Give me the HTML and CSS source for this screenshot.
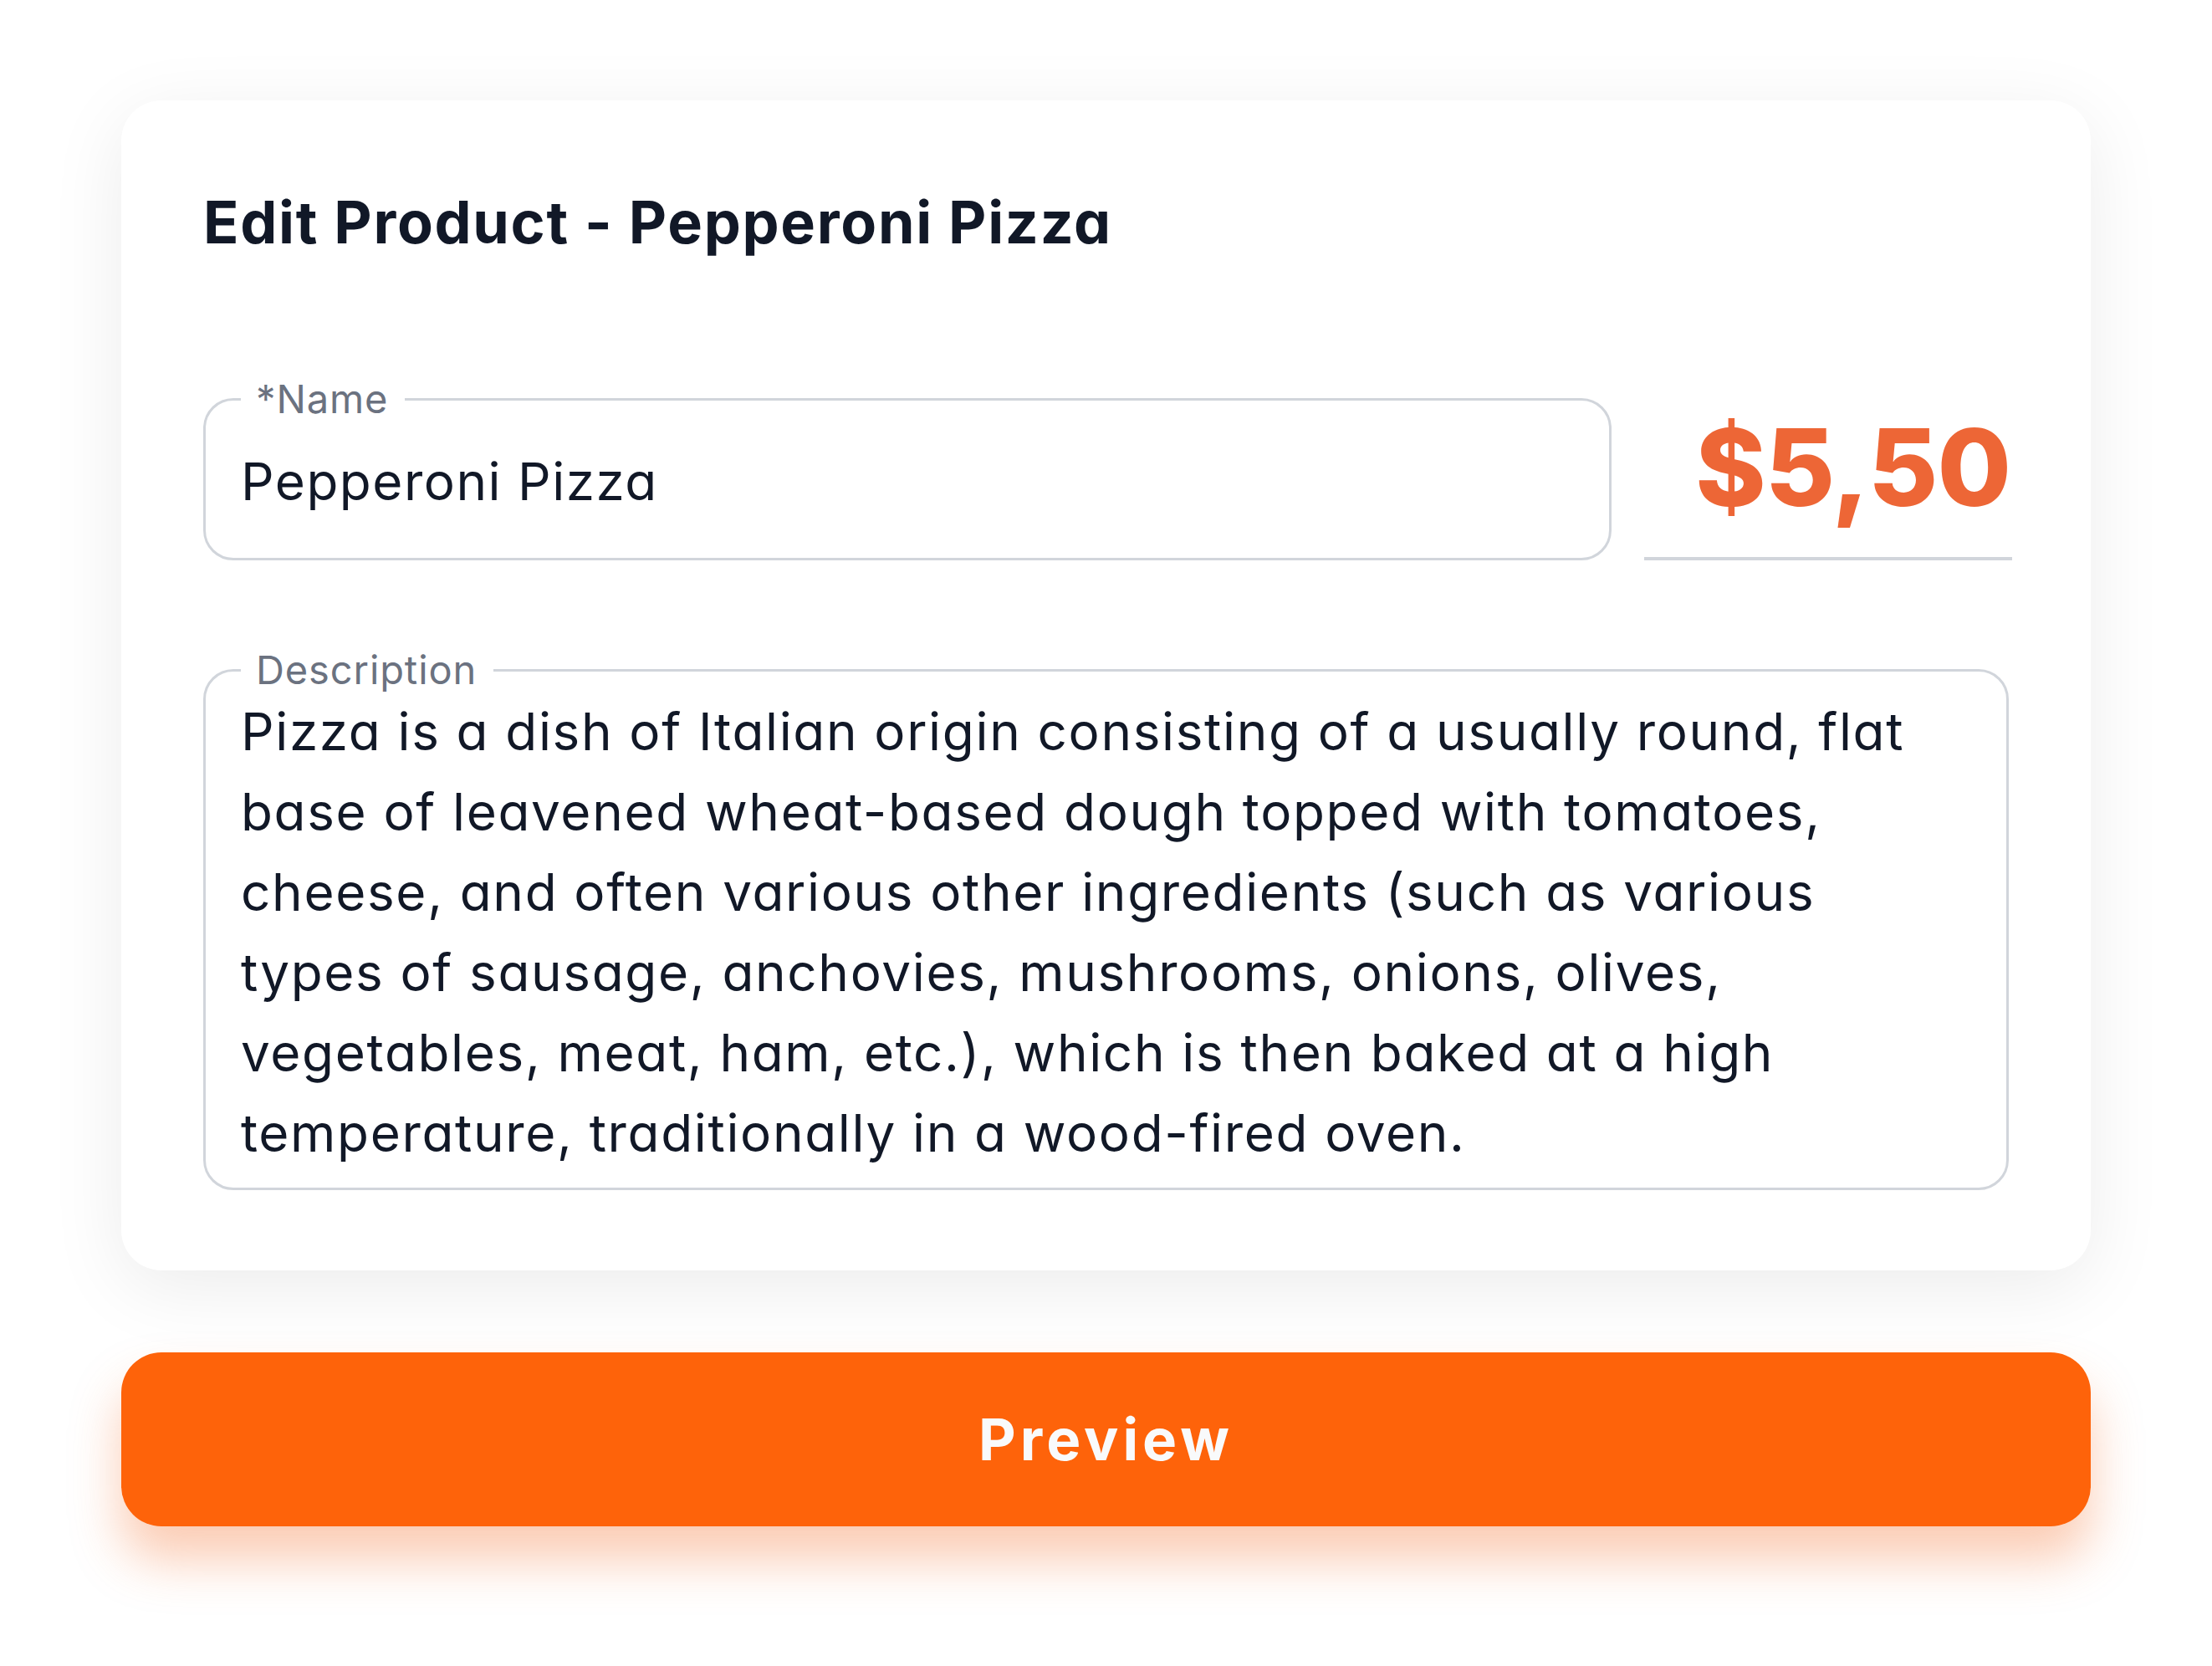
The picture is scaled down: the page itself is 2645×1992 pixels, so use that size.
FILE: index.html
```html
<!DOCTYPE html>
<html lang="en">
<head>
<meta charset="utf-8">
<title>Edit Product - Pepperoni Pizza</title>
<link rel="stylesheet" href="styles.css">
</head>
<body>
<main class="page">
  <section class="card">
    <h1 class="title">Edit Product - Pepperoni Pizza</h1>
    <div class="row">
      <fieldset class="field field-name">
        <legend class="field-label">*Name</legend>
        <div class="field-value">Pepperoni Pizza</div>
      </fieldset>
      <div class="price">$5,50</div>
    </div>
    <fieldset class="field field-desc">
      <legend class="field-label">Description</legend>
      <div class="desc-text">
        <span class="line">Pizza is a dish of Italian origin consisting of a usually round, flat</span>
        <span class="line">base of leavened wheat-based dough topped with tomatoes,</span>
        <span class="line">cheese, and often various other ingredients (such as various</span>
        <span class="line">types of sausage, anchovies, mushrooms, onions, olives,</span>
        <span class="line">vegetables, meat, ham, etc.), which is then baked at a high</span>
        <span class="line">temperature, traditionally in a wood-fired oven.</span>
      </div>
    </fieldset>
  </section>
  <button class="preview-btn" type="button">Preview</button>
</main>
</body>
</html>
```

FILE: styles.css
```css
* { box-sizing: border-box; }

html, body {
  margin: 0;
  padding: 0;
  background: #ffffff;
}

body {
  min-height: 100vh;
  font-family: Inter, "Noto Sans", "Liberation Sans", sans-serif;
  color: #111827;
  font-feature-settings: "cv11" 1;
}

.page {
  width: 2355px;
  margin: 0 auto;
  padding: 120px 0 168px 0;
  display: flex;
  flex-direction: column;
  gap: 98px;
}

.card {
  background: #ffffff;
  border-radius: 48px;
  box-shadow: 0 20px 90px rgba(0, 0, 0, 0.08);
  padding: 104px 98px 96px 98px;
  display: flex;
  flex-direction: column;
}

.title {
  margin: 0 0 143px 0;
  font-size: 70px;
  line-height: 84px;
  font-weight: 700;
  color: #111827;
  letter-spacing: 1.7px;
}

.row {
  display: flex;
  align-items: flex-end;
  gap: 39px;
  margin-bottom: 105px;
}

.field {
  margin: 0;
  border: 3px solid #d1d5db;
  border-radius: 36px;
  min-width: 0;
}

.field-label {
  margin-left: 0;
  padding: 0 20px 0 18px;
  font-size: 47px;
  line-height: 52px;
  color: #6b7280;
  font-weight: 400;
  letter-spacing: 0.9px;
  font-feature-settings: normal;
}

.field-name {
  flex: 1;
  padding: 33px 41px 51px 42px;
}

.field-value {
  font-size: 62px;
  line-height: 80px;
  color: #111827;
  letter-spacing: 1.5px;
}

.price {
  width: 440px;
  flex: none;
  margin-right: -4px;
  text-align: right;
  font-size: 128px;
  line-height: 140px;
  font-weight: 800;
  color: #ed6636;
  padding: 0 2px 37px 0;
  border-bottom: 4px solid #d1d5db;
  letter-spacing: -1px;
}

.field-desc {
  padding: 0 41px 17px 42px;
}

.desc-text {
  font-size: 62px;
  line-height: 96px;
  color: #111827;
  letter-spacing: 1.65px;
}

.line {
  display: block;
  white-space: nowrap;
}

.preview-btn {
  height: 208px;
  border: none;
  border-radius: 48px;
  background: #fe630a;
  color: #f9fafb;
  font-family: Inter, "Noto Sans", "Liberation Sans", sans-serif;
  font-size: 69px;
  font-weight: 700;
  letter-spacing: 5px;
  box-shadow: 0 40px 60px rgba(244, 110, 40, 0.35);
  cursor: pointer;
}
```
